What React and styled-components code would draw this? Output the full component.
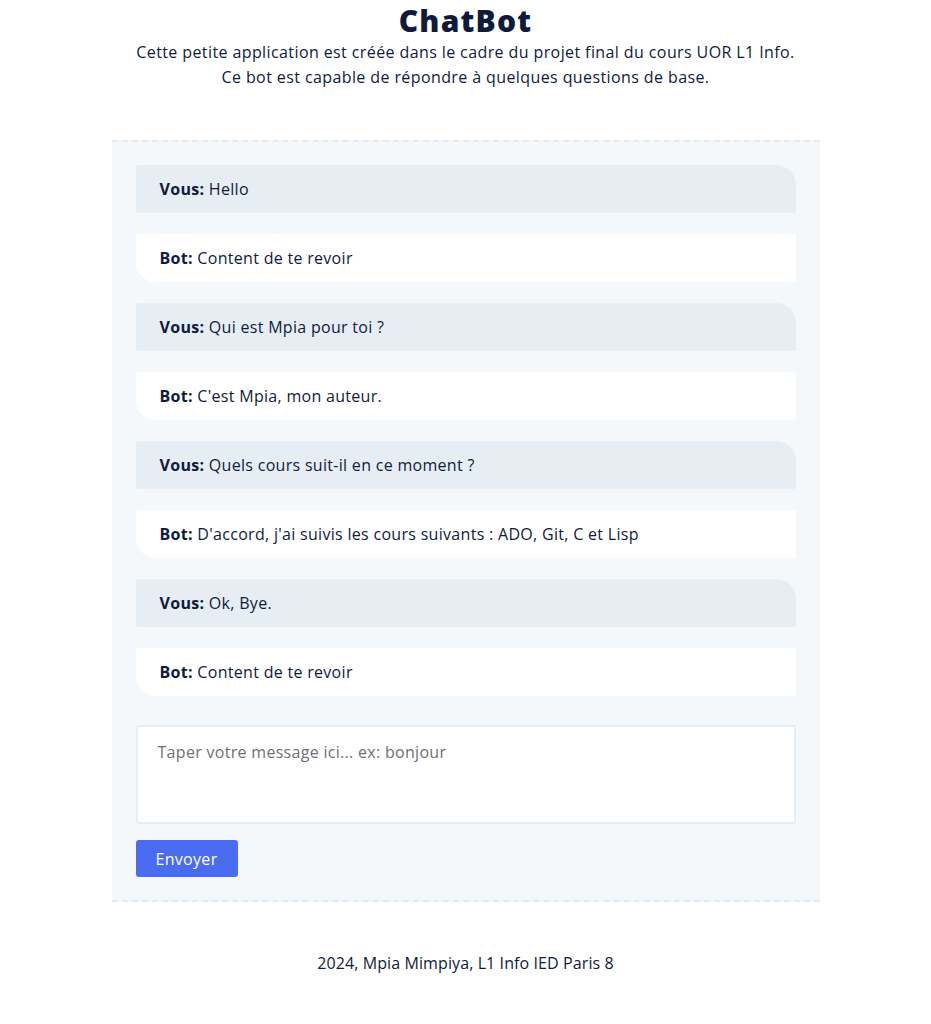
import React, { useState } from "react";
import styled, { createGlobalStyle } from "styled-components";

const GlobalStyle = createGlobalStyle`
  body {
    margin: 0;
    background: #ffffff;
    font-family: "Open Sans", "Noto Sans", sans-serif;
    color: #0f1b3d;
  }
`;

const messages = [
  { from: "Vous", text: "Hello" },
  { from: "Bot", text: "Content de te revoir" },
  { from: "Vous", text: "Qui est Mpia pour toi ?" },
  { from: "Bot", text: "C'est Mpia, mon auteur." },
  { from: "Vous", text: "Quels cours suit-il en ce moment ?" },
  { from: "Bot", text: "D'accord, j'ai suivis les cours suivants : ADO, Git, C et Lisp" },
  { from: "Vous", text: "Ok, Bye." },
  { from: "Bot", text: "Content de te revoir" },
];

function App() {
  const [draft, setDraft] = useState("");
  return (
    <Page>
      <GlobalStyle />
      <Header>
        <Title>ChatBot</Title>
        <Intro>
          Cette petite application est créée dans le cadre du projet final du cours UOR L1 Info.
          <br />
          Ce bot est capable de répondre à quelques questions de base.
        </Intro>
      </Header>
      <ChatBox>
        <MessageList>
          {messages.map((m, i) => (
            <Bubble key={i} $user={m.from === "Vous"}>
              <strong>{m.from}:</strong> {m.text}
            </Bubble>
          ))}
        </MessageList>
        <Input
          placeholder="Taper votre message ici... ex: bonjour"
          value={draft}
          onChange={(e) => setDraft(e.target.value)}
        />
        <SendButton>Envoyer</SendButton>
      </ChatBox>
      <Footer>2024, Mpia Mimpiya, L1 Info IED Paris 8</Footer>
    </Page>
  );
}

const Page = styled.div`
  display: flex;
  flex-direction: column;
  align-items: center;
  padding: 3px 0 40px;
`;

const Header = styled.header`
  text-align: center;
  margin-bottom: 50px;
`;

const Title = styled.h1`
  margin: 0;
  font-size: 30px;
  line-height: 36px;
  font-weight: 800;
  letter-spacing: 1.2px;
  color: #0f1b3d;
`;

const Intro = styled.p`
  margin: 1px 0 0;
  font-size: 16px;
  line-height: 25px;
  letter-spacing: 0.4px;
  color: #0f1b3d;
`;

const ChatBox = styled.section`
  box-sizing: border-box;
  width: 708px;
  background: #f5f8fa;
  border-top: 2px dashed #e3ebf1;
  border-bottom: 2px dashed #e3ebf1;
  padding: 23px 24px 23px;
  display: flex;
  flex-direction: column;
  align-items: flex-start;
`;

const MessageList = styled.div`
  width: 100%;
  display: flex;
  flex-direction: column;
  gap: 21px;
  margin-bottom: 29px;
`;

const Bubble = styled.div`
  box-sizing: border-box;
  width: 100%;
  padding: 12px 24px;
  font-size: 16px;
  line-height: 24px;
  letter-spacing: 0.3px;
  color: #0f1b3d;
  background: ${(p) => (p.$user ? "#e6eef4" : "#ffffff")};
  border-radius: ${(p) => (p.$user ? "3px 20px 3px 3px" : "3px 3px 3px 20px")};
  strong {
    font-weight: 700;
  }
`;

const Input = styled.textarea`
  box-sizing: border-box;
  width: 100%;
  height: 99px;
  padding: 13px 20px;
  border: 2px solid #e6eef4;
  border-radius: 3px;
  background: #ffffff;
  font-family: inherit;
  font-size: 16px;
  line-height: 24px;
  letter-spacing: 0.3px;
  color: #0f1b3d;
  resize: none;
  outline: none;
  &::placeholder {
    color: #6f6f76;
  }
`;

const SendButton = styled.button`
  margin-top: 16px;
  height: 37px;
  width: 102px;
  border: 0;
  border-radius: 3px;
  background: #4a6cf1;
  color: #ffffff;
  font-family: inherit;
  font-size: 16px;
  letter-spacing: 0.3px;
  cursor: pointer;
  &:hover {
    background: #3b5ce0;
  }
`;

const Footer = styled.footer`
  margin-top: 49px;
  font-size: 16px;
  line-height: 24px;
  letter-spacing: 0.1px;
  color: #0f1b3d;
`;

export default App;
